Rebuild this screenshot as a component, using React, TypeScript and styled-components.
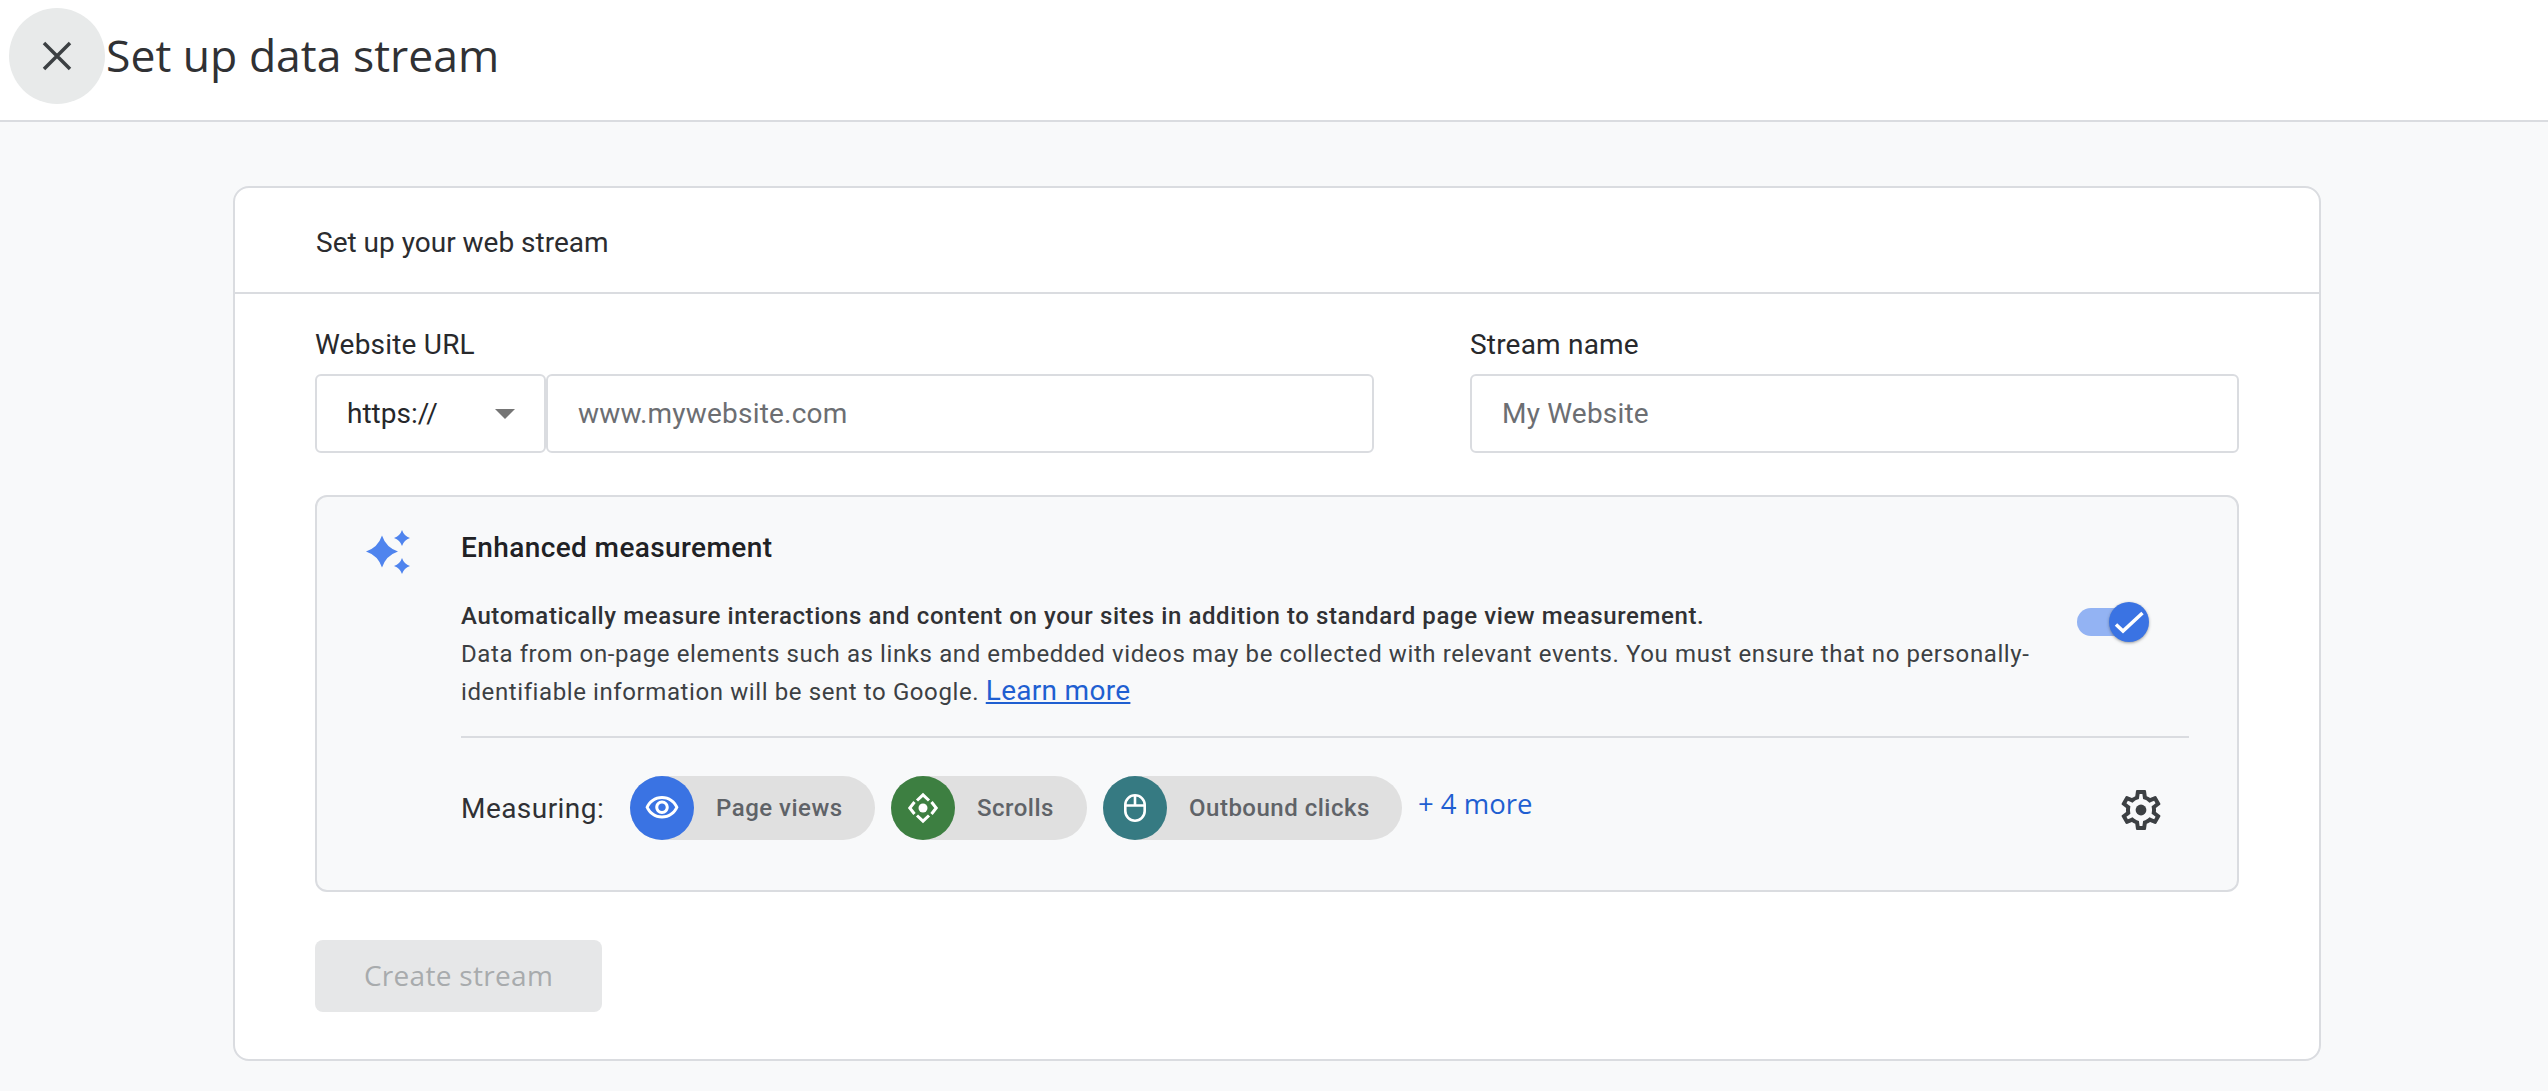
import React from "react";
import styled, { createGlobalStyle } from "styled-components";

const GlobalStyle = createGlobalStyle`
  html, body {
    margin: 0;
    height: 100%;
    background: #f8f9fa;
    overflow: hidden;
  }
  * { box-sizing: border-box; }
`;

const Page = styled.div`
  width: 2548px;
  height: 1091px;
  font-family: Roboto, "Liberation Sans", sans-serif;
  color: #202124;
`;

const TopBar = styled.header`
  height: 122px;
  padding: 8px 0 0 9px;
  display: flex;
  align-items: flex-start;
  background: #fff;
  border-bottom: 2px solid #dadce0;
`;

const CloseButton = styled.button`
  width: 96px;
  height: 96px;
  border: 0;
  padding: 0;
  border-radius: 50%;
  background: #e8eaea;
  color: #3c4043;
  display: flex;
  align-items: center;
  justify-content: center;
`;

const PageTitle = styled.h1`
  margin: 0 0 0 1px;
  font-family: "Open Sans", sans-serif;
  font-size: 44.5px;
  line-height: 94px;
  font-weight: 500;
  color: #303134;
`;

const Main = styled.main`
  padding: 64px 227px 0 233px;
`;

const Card = styled.section`
  height: 875px;
  background: #fff;
  border: 2px solid #dadce0;
  border-radius: 16px;
`;

const CardHeader = styled.div`
  height: 106px;
  padding: 5px 0 0 81px;
  display: flex;
  align-items: center;
  border-bottom: 2px solid #dadce0;
  font-size: 28px;
  color: #2b2c2f;
`;

const CardBody = styled.div`
  padding: 29px 80px 0;
`;

const FieldRow = styled.div`
  display: grid;
  grid-template-columns: 1059px 769px;
  justify-content: space-between;
`;

const Field = styled.div`
  display: flex;
  flex-direction: column;
`;

const Label = styled.label`
  font-size: 28px;
  line-height: 44px;
  letter-spacing: 0.2px;
  color: #28292c;
  margin-bottom: 7px;
`;

const InputGroup = styled.div`
  display: flex;
`;

const SelectBox = styled.div`
  width: 231px;
  height: 79px;
  padding: 0 29px 0 30px;
  display: flex;
  align-items: center;
  justify-content: space-between;
  border: 2px solid #dadce0;
  border-radius: 6px;
  background: #fff;
  font-size: 28px;
  color: #26272a;
`;

const Caret = styled.span`
  width: 0;
  height: 0;
  border-left: 10px solid transparent;
  border-right: 10px solid transparent;
  border-top: 10px solid #757575;
`;

const TextInput = styled.input`
  flex: 1;
  min-width: 0;
  height: 79px;
  padding: 0 30px;
  border: 2px solid #dadce0;
  border-radius: 6px;
  background: #fff;
  font-family: inherit;
  font-size: 28px;
  letter-spacing: 0.2px;
  outline: none;

  &::placeholder {
    color: #6c6e72;
    opacity: 1;
  }
`;

const MeasurePanel = styled.div`
  margin-top: 42px;
  height: 397px;
  padding: 32px 48px 0 47px;
  display: grid;
  grid-template-columns: 48px 1fr;
  column-gap: 49px;
  background: #f8f9fa;
  border: 2px solid #dadce0;
  border-radius: 12px;
`;

const Sparkle = styled.svg`
  fill: #4f84ee;
`;

const PanelContent = styled.div`
  display: flex;
  flex-direction: column;
`;

const PanelTitle = styled.h2`
  margin: 0;
  font-size: 28px;
  line-height: 38px;
  font-weight: 500;
  letter-spacing: 0.4px;
  color: #202124;
`;

const DescriptionRow = styled.div`
  margin-top: 30px;
  display: flex;
  justify-content: space-between;
  padding-right: 60px;
`;

const Description = styled.div`
  width: 1590px;
  font-size: 24px;
  line-height: 38px;
  letter-spacing: 0.6px;
  color: #3c4043;
`;

const Lead = styled.div`
  font-weight: 500;
  color: #303134;
`;

const LearnMore = styled.a`
  display: inline-block;
  font-size: 28px;
  line-height: 30px;
  letter-spacing: 0.3px;
  color: #1f5fd1;
  text-decoration: underline;
`;

const Toggle = styled.div`
  position: relative;
  width: 52px;
  height: 28px;
  margin-top: 11px;
  border-radius: 14px;
  background: #93b3f3;
`;

const Thumb = styled.span`
  position: absolute;
  top: -6px;
  right: -20px;
  width: 40px;
  height: 40px;
  border-radius: 50%;
  background: #3a73e3;
  box-shadow: 0 1px 3px rgba(60, 64, 67, 0.5);
  display: flex;
  align-items: center;
  justify-content: center;
`;

const Divider = styled.hr`
  margin: 25px 0 0;
  border: 0;
  border-top: 2px solid #dadce0;
`;

const MeasuringRow = styled.div`
  margin-top: 38px;
  display: flex;
  align-items: center;
`;

const MeasuringLabel = styled.span`
  width: 169px;
  font-size: 28px;
  letter-spacing: 0.45px;
  color: #303134;
`;

const Chips = styled.div`
  display: flex;
  gap: 16px;
  align-items: center;
`;

const Chip = styled.div<{ $width: number }>`
  width: ${(p) => p.$width}px;
  height: 64px;
  display: flex;
  align-items: center;
  border-radius: 32px;
  background: #e0e0e0;
`;

const ChipIcon = styled.span<{ $color: string }>`
  width: 64px;
  height: 64px;
  flex-shrink: 0;
  border-radius: 50%;
  background: ${(p) => p.$color};
  display: flex;
  align-items: center;
  justify-content: center;
  color: #fff;
`;

const ChipText = styled.span`
  margin-left: 22px;
  font-size: 24px;
  font-weight: 500;
  letter-spacing: 0.5px;
  color: #5f6368;
`;

const MoreLink = styled.a`
  margin-top: -9px;
  font-family: "Open Sans", sans-serif;
  font-size: 27.5px;
  font-weight: 500;
  color: #1f5fd1;
  text-decoration: none;
`;

const Gear = styled.svg`
  margin: 4px 24px 0 auto;
  fill: #3c4043;
`;

const CreateButton = styled.button`
  display: block;
  margin-top: 48px;
  width: 287px;
  height: 72px;
  padding: 0 0 3px;
  border: 0;
  border-radius: 8px;
  background: #e6e7e8;
  color: #a8abad;
  font-family: "Open Sans", sans-serif;
  font-size: 28px;
  letter-spacing: 0.3px;
`;

const chips = [
  {
    label: "Page views",
    color: "#3a73e3",
    width: 245,
    icon: (
      <svg width="36" height="36" viewBox="0 0 24 24" fill="currentColor">
        <path d="M12 6c3.79 0 7.17 2.13 8.82 5.5C19.17 14.87 15.79 17 12 17s-7.17-2.13-8.82-5.5C4.83 8.13 8.21 6 12 6m0-2C7 4 2.73 7.11 1 11.5 2.73 15.89 7 19 12 19s9.27-3.11 11-7.5C21.27 7.11 17 4 12 4zm0 5c1.38 0 2.5 1.12 2.5 2.5S13.38 14 12 14s-2.5-1.12-2.5-2.5S10.62 9 12 9m0-2c-2.48 0-4.5 2.02-4.5 4.5S9.52 16 12 16s4.5-2.02 4.5-4.5S14.48 7 12 7z" />
      </svg>
    ),
  },
  {
    label: "Scrolls",
    color: "#3d7f41",
    width: 196,
    icon: (
      <svg width="32" height="32" viewBox="0 0 32 32" fill="none" stroke="currentColor" strokeWidth="3">
        <path d="M10 8.500 16 2.800l6 5.700" />
        <path d="M10 23.500 16 29.200l6-5.700" />
        <path d="M7.500 10 2.800 16l4.700 6" />
        <path d="M24.500 10 29.200 16l-4.700 6" />
        <circle cx="16" cy="16" r="4.500" fill="currentColor" stroke="none" />
      </svg>
    ),
  },
  {
    label: "Outbound clicks",
    color: "#367a82",
    width: 299,
    icon: (
      <svg width="32" height="32" viewBox="0 0 32 32" fill="none" stroke="currentColor" strokeWidth="2.600">
        <rect x="6.300" y="3.300" width="19.400" height="25.400" rx="9.700" />
        <path d="M6.300 13.500h19.400M16 3.300v10.200" />
      </svg>
    ),
  },
];

const App = () => {
  return (
    <Page>
      <GlobalStyle />
      <TopBar>
        <CloseButton aria-label="Close">
          <svg width="32" height="32" viewBox="0 0 32 32" fill="none" stroke="currentColor" strokeWidth="3.500">
            <path d="M3 3l26 26M29 3 3 29" />
          </svg>
        </CloseButton>
        <PageTitle>Set up data stream</PageTitle>
      </TopBar>
      <Main>
        <Card>
          <CardHeader>Set up your web stream</CardHeader>
          <CardBody>
            <FieldRow>
              <Field>
                <Label>Website URL</Label>
                <InputGroup>
                  <SelectBox>
                    https://
                    <Caret />
                  </SelectBox>
                  <TextInput placeholder="www.mywebsite.com" />
                </InputGroup>
              </Field>
              <Field>
                <Label>Stream name</Label>
                <TextInput placeholder="My Website" />
              </Field>
            </FieldRow>
            <MeasurePanel>
              <Sparkle width="48" height="48" viewBox="0 0 48 48">
                <path d="M18 6.500Q22 18.500 34 22.500 22 26.500 18 38.500 14 26.500 2 22.500 14 18.500 18 6.500z" />
                <path d="M38 1Q40 7 46 9 40 11 38 17 36 11 30 9 36 7 38 1z" />
                <path d="M38 29Q40 35 46 37 40 39 38 45 36 39 30 37 36 35 38 29z" />
              </Sparkle>
              <PanelContent>
                <PanelTitle>Enhanced measurement</PanelTitle>
                <DescriptionRow>
                  <Description>
                    <Lead>
                      Automatically measure interactions and content on your sites in addition to standard page view
                      measurement.
                    </Lead>
                    Data from on-page elements such as links and embedded videos may be collected with relevant events.
                    You must ensure that no personally-identifiable information will be sent to Google.{" "}
                    <LearnMore href="#">Learn more</LearnMore>
                  </Description>
                  <Toggle>
                    <Thumb>
                      <svg width="30" height="30" viewBox="0 0 30 30" fill="none" stroke="#fff" strokeWidth="3.500">
                        <path d="M2 17.500 9 24 28.500 6" />
                      </svg>
                    </Thumb>
                  </Toggle>
                </DescriptionRow>
                <Divider />
                <MeasuringRow>
                  <MeasuringLabel>Measuring:</MeasuringLabel>
                  <Chips>
                    {chips.map((c) => (
                      <Chip key={c.label} $width={c.width}>
                        <ChipIcon $color={c.color}>{c.icon}</ChipIcon>
                        <ChipText>{c.label}</ChipText>
                      </Chip>
                    ))}
                    <MoreLink href="#">+ 4 more</MoreLink>
                  </Chips>
                  <Gear width="48" height="48" viewBox="0 0 24 24">
                    <path d="M19.430 12.980c.04-.32.07-.64.07-.98 0-.34-.03-.66-.07-.98l2.110-1.650c.19-.15.24-.42.12-.64l-2-3.460c-.09-.16-.26-.25-.44-.25-.06 0-.12.01-.17.03l-2.490 1c-.52-.4-1.080-.73-1.690-.98l-.38-2.650C14.460 2.180 14.250 2 14 2h-4c-.25 0-.46.18-.49.42l-.38 2.650c-.61.25-1.170.59-1.690.98l-2.490-1c-.06-.02-.12-.03-.18-.03-.17 0-.34.09-.43.25l-2 3.460c-.13.22-.07.49.12.64l2.110 1.650c-.04.32-.07.65-.07.98 0 .33.03.66.07.98l-2.110 1.650c-.19.15-.24.42-.12.64l2 3.460c.09.16.26.25.44.25.06 0 .12-.01.17-.03l2.490-1c.52.4 1.080.73 1.690.98l.38 2.650c.03.24.24.42.49.42h4c.25 0 .46-.18.49-.42l.38-2.650c.61-.25 1.170-.59 1.690-.98l2.490 1c.06.02.12.03.18.03.17 0 .34-.09.43-.25l2-3.460c.12-.22.07-.49-.12-.64l-2.110-1.650zm-1.980-1.710c.04.31.05.52.05.73 0 .21-.02.43-.05.73l-.14 1.130.89.7 1.080.84-.7 1.210-1.270-.51-1.040-.42-.9.68c-.43.32-.84.56-1.250.73l-1.060.43-.16 1.130-.2 1.350h-1.400l-.19-1.350-.16-1.130-1.060-.43c-.43-.18-.83-.41-1.230-.71l-.91-.7-1.060.43-1.270.51-.7-1.210 1.080-.84.89-.7-.14-1.130c-.03-.31-.05-.54-.05-.74s.02-.43.05-.73l.14-1.130-.89-.7-1.080-.84.7-1.210 1.270.51 1.040.42.9-.68c.43-.32.84-.56 1.250-.73l1.060-.43.16-1.130.2-1.350h1.390l.19 1.350.16 1.130 1.060.43c.43.18.83.41 1.230.71l.91.7 1.060-.43 1.270-.51.7 1.210-1.070.85-.89.7.14 1.130z" />
                    <circle cx="12" cy="12" r="2.700" />
                  </Gear>
                </MeasuringRow>
              </PanelContent>
            </MeasurePanel>
            <CreateButton disabled>Create stream</CreateButton>
          </CardBody>
        </Card>
      </Main>
    </Page>
  );
};

export default App;
